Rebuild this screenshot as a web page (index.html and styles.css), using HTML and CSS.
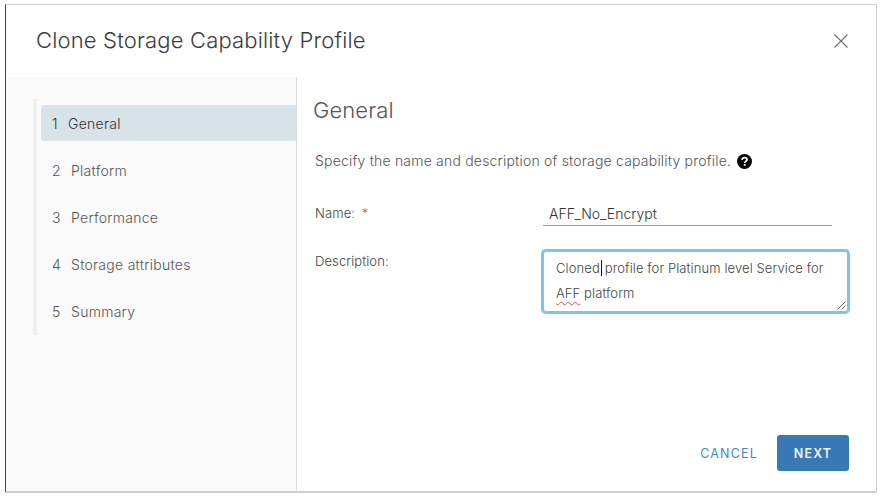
FILE: index.html
```html
<!DOCTYPE html>
<html lang="en">
<head>
<meta charset="utf-8">
<title>Clone Storage Capability Profile</title>
<link rel="stylesheet" href="styles.css">
</head>
<body>
<div class="modal">
  <header class="modal-header">
    <h1 class="modal-title">Clone Storage Capability Profile</h1>
    <button class="close" aria-label="Close">
      <svg width="14" height="14" viewBox="0 0 14 14"><path d="M0.5 0.5L13.5 13.5M13.5 0.5L0.5 13.5" stroke="#6f6f6f" stroke-width="1.1" fill="none"/></svg>
    </button>
  </header>
  <div class="modal-body">
    <aside class="sidebar">
      <ol class="steps">
        <li class="step active"><span class="num">1</span>General</li>
        <li class="step"><span class="num">2</span>Platform</li>
        <li class="step"><span class="num">3</span>Performance</li>
        <li class="step"><span class="num">4</span>Storage attributes</li>
        <li class="step"><span class="num">5</span>Summary</li>
      </ol>
    </aside>
    <main class="content">
      <h2 class="section-title">General</h2>
      <p class="intro">Specify the name and description of storage capability profile.
        <svg class="help" width="15" height="15" viewBox="0 0 15 15"><circle cx="7.5" cy="7.5" r="7.5" fill="#000"/><path d="M5.1 5.9C5.2 4.5 6.2 3.7 7.6 3.7C9 3.7 10 4.5 10 5.7C10 7.3 7.7 7.3 7.7 9" stroke="#fff" stroke-width="1.7" fill="none"/><rect x="6.8" y="10" width="1.8" height="1.8" fill="#fff"/></svg>
      </p>
      <div class="form-row name-row">
        <label class="label">Name: <span class="req">*</span></label>
        <div class="input">AFF_No_Encrypt</div>
      </div>
      <div class="form-row desc-row">
        <label class="label">Description:</label>
        <div class="textarea">
          <div class="line">Cloned<span class="caret"></span>profile for Platinum level Service for</div>
          <div class="line"><span class="misspelt">AFF</span> platform</div>
          <svg class="grip" width="9" height="9" viewBox="0 0 9 9"><path d="M0.5 8.5L8.5 0.5M4.5 8.5L8.5 4.5" stroke="#666" stroke-width="1" fill="none"/></svg>
        </div>
      </div>
      <div class="actions">
        <button class="btn-link">CANCEL</button>
        <button class="btn-primary">NEXT</button>
      </div>
    </main>
  </div>
</div>
</body>
</html>
```

FILE: styles.css
```css
* { box-sizing: border-box; }
html, body { margin: 0; height: 100%; background: #fff; }
body {
  padding: 4px 4px 4px 5px;
  font-family: Inter, "Open Sans", "Liberation Sans", sans-serif;
  color: #565656;
}
.modal {
  width: 872px;
  height: 489px;
  display: flex;
  flex-direction: column;
  border-top: 1px solid #d4d4d4;
  border-left: 1px solid #444;
  border-right: 1px solid #d0d0d0;
  border-bottom: 2px solid #d0d0d0;
  background: #fff;
}
.modal-header {
  height: 72px;
  flex: none;
  display: flex;
  align-items: center;
  justify-content: space-between;
  padding: 0 28px 0 30px;
}
.modal-title {
  margin: 0;
  font-size: 22px;
  letter-spacing: 0.17px;
  font-weight: 300;
  color: #3c3c3c;
  position: relative;
  top: -1px;
}
.close { border: 0; background: none; padding: 0; display: flex; }
.modal-body { flex: 1; display: flex; min-height: 0; }
.sidebar {
  width: 291px;
  flex: none;
  background: #fafafa;
  border-right: 1px solid #dcdcdc;
  padding: 22px 0 0 27px;
}
.steps {
  list-style: none;
  margin: 0;
  padding: 6px 0;
  border-left: 4px solid #efefef;
  height: 236px;
}
.step {
  height: 36px;
  margin-bottom: 11px;
  margin-left: 4px;
  padding-left: 11px;
  display: flex;
  align-items: center;
  font-size: 14px;
  font-weight: 300;
  letter-spacing: 0.28px;
  color: #555;
}
.num { width: 19px; flex: none; }
.active {
  background: #d8e3e9;
  border-radius: 3px 0 0 3px;
  color: #333;
}
.active .num { width: 16px; }
.content {
  flex: 1;
  min-width: 0;
  display: flex;
  flex-direction: column;
  padding: 19px 27px 20px 18px;
}
.section-title {
  margin: 0 0 0 -2px;
  font-size: 22px;
  line-height: 28px;
  letter-spacing: 0.1px;
  font-weight: 300;
  color: #555;
}
.intro {
  margin: 27px 0 0;
  font-size: 14px;
  letter-spacing: 0.2px;
  line-height: 20px;
  font-weight: 300;
  color: #555;
  display: flex;
  align-items: center;
  gap: 6px;
}
.help { flex: none; }
.form-row { display: flex; }
.label { width: 228px; flex: none; font-size: 13px; letter-spacing: 0.1px; font-weight: 300; color: #444; }
.req { color: #d9534f; margin-left: 3px; }
.name-row { margin-top: 32px; align-items: flex-start; }
.name-row .label { line-height: 20px; }
.input {
  width: 289px;
  height: 23px;
  border-bottom: 1px solid #9a9a9a;
  padding-left: 6px;
  font-size: 14px;
  line-height: 22px;
  font-weight: 300;
  color: #333;
}
.desc-row { margin-top: 25px; }
.desc-row .label { line-height: 20px; }
.textarea {
  position: relative;
  width: 305px;
  height: 61px;
  border: 1px solid #b5b5b5;
  border-radius: 3px;
  box-shadow: 0 0 0 2px #7cc6e6;
  padding: 4px 12px 0;
  background: #fff;
  font-size: 13px;
  letter-spacing: 0.1px;
  line-height: 25px;
  font-weight: 300;
  color: #444;
}
.line { white-space: nowrap; }
.caret { display: inline-block; width: 1px; height: 16px; background: #111; vertical-align: -3px; margin: 0 3px 0 1px; }
.misspelt { text-decoration: underline wavy #d9534f 1px; text-underline-offset: 3px; }
.grip { position: absolute; right: 1px; bottom: 1px; }
.actions {
  margin-top: auto;
  display: flex;
  justify-content: flex-end;
  align-items: center;
  gap: 19px;
  padding-right: 0;
}
.btn-link, .btn-primary {
  border: 0;
  font-family: inherit;
  font-size: 12.5px;
  letter-spacing: 1.2px;
  height: 36px;
}
.btn-link { background: none; color: #3f87bd; font-weight: 400; padding: 0; }
.btn-primary { width: 72px; background: #3878b5; color: #eef5fa; font-weight: 600; border-radius: 3px; }
```
